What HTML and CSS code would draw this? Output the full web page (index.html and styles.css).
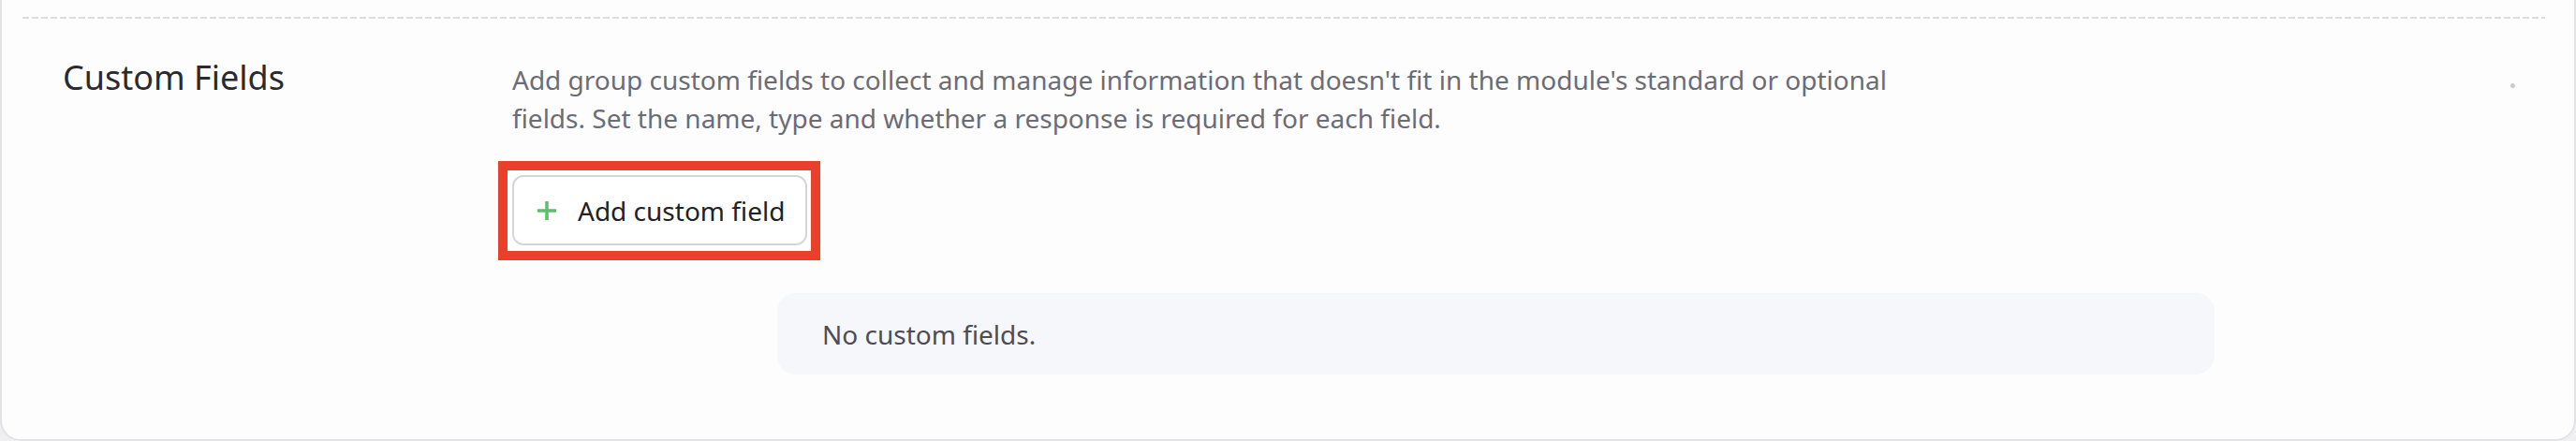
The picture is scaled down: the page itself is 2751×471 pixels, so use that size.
FILE: index.html
```html
<!DOCTYPE html>
<html lang="en">
<head>
    <meta charset="UTF-8">
    <meta name="viewport" content="width=device-width, initial-scale=1.0">
    <title>Custom Fields</title>
    <link rel="stylesheet" href="styles.css">
</head>
<body>

<div class="card">
    <div class="divider"></div>
    <section class="field-section">
        <h2 class="section-title">Custom Fields</h2>
        <div class="section-body">
            <p class="section-desc">Add group custom fields to collect and manage information that doesn't fit in the module's standard or optional fields. Set the name, type and whether a response is required for each field.</p>
            <div class="highlight">
                <button class="add-btn" type="button">
                    <svg class="plus" viewBox="0 0 22 22" width="22" height="22" aria-hidden="true">
                        <path d="M11 1v20M1 11h20" stroke="#5cbf6c" stroke-width="3.5" fill="none"/>
                    </svg>
                    Add custom field
                </button>
            </div>
            <div class="empty-box">No custom fields.</div>
        </div>
        <span class="dot"></span>
    </section>
</div>

</body>
</html>
```

FILE: styles.css
```css
body {
    margin: 0;
    background: #efeff2;
    font-family: "Noto Sans", "Open Sans", sans-serif;
    color: #2b2b30;
}
.card {
    background: #fdfdfe;
    border: 2px solid #e3e3e7;
    border-top: none;
    border-radius: 0 0 22px 22px;
    padding: 18px 31px 70px 22px;
    height: 381px;
}
.divider {
    height: 2px;
    background-image: linear-gradient(to right, #dcdce1 70%, transparent 0);
    background-size: 10px 2px;
    background-repeat: repeat-x;
}
.field-section {
    position: relative;
    display: grid;
    grid-template-columns: 480px 1fr;
    align-items: baseline;
    padding: 42px 0 0 43px;
}
.section-title {
    margin: 0;
    font-size: 36px;
    font-weight: 400;
    line-height: 42px;
    color: #2a2a2f;
}
.section-desc {
    margin: 0;
    max-width: 1500px;
    font-size: 28px;
    line-height: 41px;
    color: #6c6c75;
}
.highlight {
    display: inline-flex;
    margin: 25px 0 0 -15px;
    padding: 5px 4px 6px 5px;
    border: 10px solid #e8402a;
    background: #fff;
}
.add-btn {
    display: flex;
    align-items: center;
    gap: 22px;
    height: 75px;
    padding: 0 22px 0 24px;
    border: 2px solid #d6d6da;
    border-radius: 12px;
    background: #fff;
    font-family: inherit;
    font-size: 28px;
    color: #222226;
    cursor: pointer;
}
.plus {
    display: block;
}
.empty-box {
    margin: 35px 0 0 283px;
    width: 1535px;
    height: 87px;
    box-sizing: border-box;
    padding: 0 48px;
    display: flex;
    align-items: center;
    border-radius: 20px;
    background: #f5f7fb;
    font-size: 28px;
    color: #4d4d55;
}
.dot {
    position: absolute;
    top: 69px;
    right: 32px;
    width: 5px;
    height: 5px;
    border-radius: 50%;
    background: #cacace;
}
```
